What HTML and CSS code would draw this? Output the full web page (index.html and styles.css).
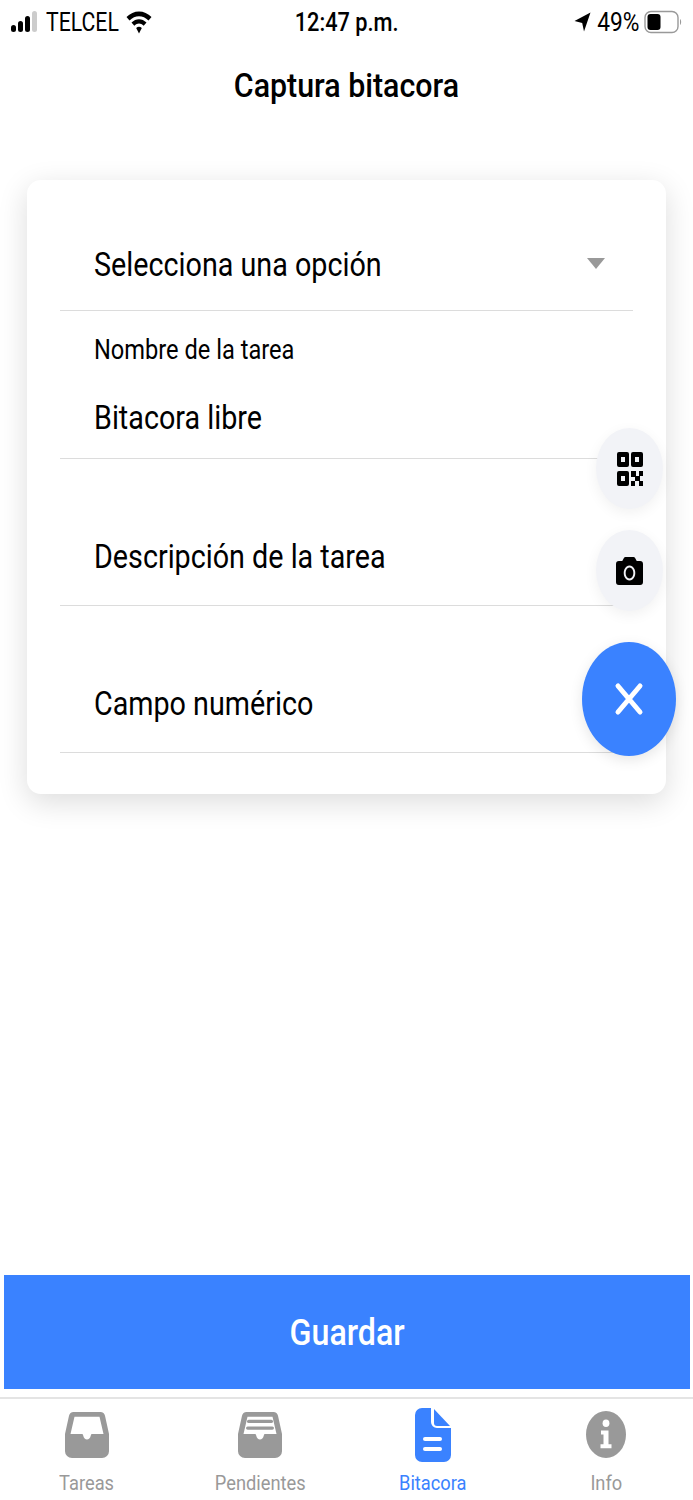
FILE: index.html
```html
<!DOCTYPE html>
<html>
<head>
    <title>Captura bitacora</title>
    <link rel="stylesheet" href="styles.css">
</head>
<body>
    <div class="phone">
        <div class="status">
            <div class="status-left">
                <svg class="signal" width="28" height="24" viewBox="0 0 28 24">
                    <rect x="0" y="15" width="5" height="7" rx="2.5" fill="#000"/>
                    <rect x="7" y="11" width="5" height="11" rx="2.5" fill="#000"/>
                    <rect x="14" y="6" width="5" height="16" rx="2.5" fill="#000"/>
                    <rect x="21" y="1" width="5" height="21" rx="2.5" fill="#ccc"/>
                </svg>
                <span class="carrier">TELCEL</span>
                <svg class="wifi" width="26" height="24" viewBox="0 0 26 24">
                    <path d="M0.5 7 C7.5 -0.5 18.5 -0.5 25.5 7 L22.5 10.5 C17 4.8 9 4.8 3.5 10.5 Z" fill="#000"/>
                    <path d="M5.5 12.5 C10 8 16 8 20.5 12.5 L17.7 15.8 C14.5 12.8 11.5 12.8 8.3 15.8 Z" fill="#000"/>
                    <path d="M10.2 18 C12 16.4 14 16.4 15.8 18 L13 23.5 Z" fill="#000"/>
                </svg>
            </div>
            <div class="time">12:47 p.m.</div>
            <div class="status-right">
                <svg width="17" height="20" viewBox="0 0 17 20">
                    <path d="M16.5 0.5 L10 19.5 L8.2 11 L0.5 9 Z" fill="#000"/>
                </svg>
                <span class="percent">49%</span>
                <svg width="38" height="24" viewBox="0 0 38 24">
                    <rect x="1" y="1.5" width="33" height="21" rx="6" fill="none" stroke="#999" stroke-width="1.4"/>
                    <rect x="3.5" y="4" width="13" height="16" rx="3" fill="#000"/>
                    <path d="M36 9 C37.5 10 37.5 14 36 15 Z" fill="#999"/>
                </svg>
            </div>
        </div>

        <h1 class="title">Captura bitacora</h1>

        <div class="card">
            <div class="row row-select">
                <span class="row-value">Selecciona una opción</span>
                <span class="caret"></span>
            </div>
            <div class="row row-label">
                <span class="row-small">Nombre de la tarea</span>
                <span class="row-value">Bitacora libre</span>
            </div>
            <div class="row">
                <span class="row-value">Descripción de la tarea</span>
            </div>
            <div class="row">
                <span class="row-value">Campo numérico</span>
            </div>

            <div class="fab fab-small fab-qr">
                <svg width="28" height="34" viewBox="0 0 28 34">
                    <path fill-rule="evenodd" d="M1 2 a2 2 0 0 1 2 -2 h8 a2 2 0 0 1 2 2 v11 a2 2 0 0 1 -2 2 h-8 a2 2 0 0 1 -2 -2 Z M5 5 v5 h4 v-5 Z" fill="#000"/>
                    <path fill-rule="evenodd" d="M15 2 a2 2 0 0 1 2 -2 h8 a2 2 0 0 1 2 2 v11 a2 2 0 0 1 -2 2 h-8 a2 2 0 0 1 -2 -2 Z M19 5 v5 h4 v-5 Z" fill="#000"/>
                    <path fill-rule="evenodd" d="M1 21 a2 2 0 0 1 2 -2 h8 a2 2 0 0 1 2 2 v11 a2 2 0 0 1 -2 2 h-8 a2 2 0 0 1 -2 -2 Z M5 24 v5 h4 v-5 Z" fill="#000"/>
                    <rect x="15" y="19" width="5" height="6" fill="#000"/>
                    <rect x="23" y="19" width="4" height="5" fill="#000"/>
                    <rect x="19" y="24" width="5" height="5" fill="#000"/>
                    <rect x="15" y="29" width="4" height="5" fill="#000"/>
                    <rect x="23" y="29" width="4" height="5" fill="#000"/>
                </svg>
            </div>
            <div class="fab fab-small fab-camera">
                <svg width="27" height="28" viewBox="0 0 28 28" preserveAspectRatio="none">
                    <path fill-rule="evenodd" d="M10 0 h8 a2 2 0 0 1 1.8 1 l1.7 3 h3.5 a3 3 0 0 1 3 3 v18 a3 3 0 0 1 -3 3 h-22 a3 3 0 0 1 -3 -3 v-18 a3 3 0 0 1 3 -3 h3.5 l1.7 -3 a2 2 0 0 1 1.8 -1 Z M14 8.5 a6 7.5 0 1 0 0.01 0 Z M14 10.5 a4 5.5 0 1 1 -0.01 0 Z" fill="#000"/>
                </svg>
            </div>
            <div class="fab fab-main">
                <svg width="30" height="34" viewBox="0 0 30 34">
                    <path d="M4 4 L26 30 M26 4 L4 30" stroke="#fff" stroke-width="5" stroke-linecap="round" fill="none"/>
                </svg>
            </div>
        </div>

        <div class="spacer"></div>

        <button class="save"><span class="save-text">Guardar</span></button>

        <div class="tabs">
            <div class="tab">
                <svg width="44" height="46" viewBox="0 0 44 48" preserveAspectRatio="none">
                    <path fill-rule="evenodd" d="M9 0 h26 a5 5 0 0 1 5 4 l4 19 v18 a7 7 0 0 1 -7 7 h-30 a7 7 0 0 1 -7 -7 v-18 l4 -19 a5 5 0 0 1 5 -4 Z M9.5 5 l-4 18 h11 c1 0 1.5 0.5 1.7 1.5 c1 5.5 6.6 5.5 7.6 0 c0.2 -1 0.7 -1.5 1.7 -1.5 h11 l-4 -18 Z" fill="#999"/>
                </svg>
                <span class="tab-label">Tareas</span>
            </div>
            <div class="tab">
                <svg width="44" height="46" viewBox="0 0 44 48" preserveAspectRatio="none">
                    <path fill-rule="evenodd" d="M9 0 h26 a5 5 0 0 1 5 4 l4 19 v18 a7 7 0 0 1 -7 7 h-30 a7 7 0 0 1 -7 -7 v-18 l4 -19 a5 5 0 0 1 5 -4 Z M9.5 5 l-4 18 h11 c1 0 1.5 0.5 1.7 1.5 c1 5.5 6.6 5.5 7.6 0 c0.2 -1 0.7 -1.5 1.7 -1.5 h11 l-4 -18 Z" fill="#999"/>
                    <rect x="9" y="8" width="26" height="3.5" rx="1.7" fill="#999"/>
                    <rect x="8" y="15" width="28" height="3.5" rx="1.7" fill="#999"/>
                </svg>
                <span class="tab-label">Pendientes</span>
            </div>
            <div class="tab tab-active">
                <svg width="36" height="54" viewBox="0 0 36 54">
                    <path d="M7 0 h9 v14 a6 6 0 0 0 6 6 h14 v27 a7 7 0 0 1 -7 7 h-22 a7 7 0 0 1 -7 -7 v-40 a7 7 0 0 1 7 -7 Z" fill="#3a82ff"/>
                    <path d="M19 1 L35 18 h-13 a3 3 0 0 1 -3 -3 Z" fill="#3a82ff"/>
                    <rect x="8" y="29" width="19" height="4" rx="2" fill="#fff"/>
                    <rect x="8" y="39" width="19" height="4" rx="2" fill="#fff"/>
                </svg>
                <span class="tab-label">Bitacora</span>
            </div>
            <div class="tab">
                <svg width="40" height="47" viewBox="0 0 40 48" preserveAspectRatio="none">
                    <ellipse cx="20" cy="24" rx="20" ry="24" fill="#999"/>
                    <ellipse cx="20" cy="12.5" rx="3.4" ry="3.8" fill="#fff"/>
                    <path d="M15 20 h7.5 v14 h3 v4 h-11 v-4 h3 v-10 h-2.5 Z" fill="#fff"/>
                </svg>
                <span class="tab-label">Info</span>
            </div>
        </div>
    </div>
</body>
</html>
```

FILE: styles.css
```css
* {
    box-sizing: border-box;
}
body {
    margin: 0;
    background-color: white;
    font-family: Roboto, "Liberation Sans", sans-serif;
    color: #000;
}
.phone {
    width: 693px;
    height: 1500px;
    display: flex;
    flex-direction: column;
    overflow: hidden;
}
.status {
    height: 44px;
    padding: 0 11px;
    display: grid;
    grid-template-columns: 1fr auto 1fr;
    align-items: center;
}
.status-left, .status-right {
    display: flex;
    align-items: center;
}
.status-right {
    justify-content: flex-end;
    gap: 5px;
}
.carrier {
    font-size: 25px;
    margin-left: 7px;
    margin-right: -6px;
    transform: scaleX(.85);
    transform-origin: left;
}
.time {
    font-size: 25px;
    font-weight: 500;
    transform: scaleX(.87);
}
.percent {
    font-size: 25px;
    margin-left: -3px;
    transform: scaleX(.91);
    transform-origin: right;
}
.title {
    margin: 0;
    height: 136px;
    padding-top: 18px;
    text-align: center;
    font-size: 33px;
    font-weight: 500;
    line-height: 48px;
    transform: scaleX(.92);
}
.card {
    position: relative;
    margin: 0 27px;
    height: 614px;
    padding: 0 33px;
    background-color: white;
    border-radius: 14px;
    box-shadow: 0px 8px 30px rgba(0,0,0,0.14);
}
.row {
    height: 147px;
    padding: 0 34px 26px;
    border-bottom: 1px solid #dcdcdc;
    display: flex;
    align-items: flex-end;
}
.row-select {
    height: 131px;
    padding-top: 39px;
    padding-bottom: 0;
    justify-content: space-between;
    align-items: center;
}
.row-label {
    height: 148px;
    padding-bottom: 18px;
    flex-direction: column;
    align-items: flex-start;
    justify-content: flex-end;
}
.row-value {
    font-size: 33px;
    line-height: 44px;
    transform: scaleX(.87);
    transform-origin: left;
}
.row-small {
    font-size: 27px;
    line-height: 36px;
    margin-bottom: 28px;
    transform: scaleX(.875);
    transform-origin: left;
}
.caret {
    width: 0;
    height: 0;
    margin-right: -6px;
    margin-top: -3px;
    border-left: 9px solid transparent;
    border-right: 9px solid transparent;
    border-top: 11px solid #999;
}
.fab {
    position: absolute;
    border-radius: 50%;
    display: flex;
    align-items: center;
    justify-content: center;
}
.fab-small {
    right: 3px;
    width: 67px;
    height: 81px;
    background-color: #f2f3f7;
    box-shadow: 0px 4px 14px rgba(0,0,0,0.06);
}
.fab-qr {
    top: 248px;
}
.fab-camera {
    top: 350px;
}
.fab-main {
    right: -10px;
    top: 462px;
    width: 94px;
    height: 114px;
    background-color: #3a82ff;
    box-shadow: 0px 4px 14px rgba(0,0,0,0.1);
}
.spacer {
    flex: 1;
}
.save {
    display: block;
    width: 686px;
    height: 114px;
    margin: 0 3px 8px 4px;
    padding: 0;
    border: none;
    background-color: #3a82ff;
    color: white;
    font-family: Roboto, "Liberation Sans", sans-serif;
    font-size: 37px;
    font-weight: 500;
}
.save-text {
    display: inline-block;
    transform: scaleX(.87);
}
.tabs {
    height: 103px;
    border-top: 2px solid #e4e4e4;
    display: flex;
}
.tab {
    width: 173.25px;
    display: flex;
    flex-direction: column;
    align-items: center;
    justify-content: flex-end;
    padding-bottom: 4px;
    color: #999;
}
.tab svg {
    margin-bottom: 12px;
}
.tab-active {
    color: #3a82ff;
}
.tab-active svg {
    margin-bottom: 8px;
}
.tab-label {
    font-size: 21px;
    line-height: 26px;
    transform: scaleX(.87);
}
```
